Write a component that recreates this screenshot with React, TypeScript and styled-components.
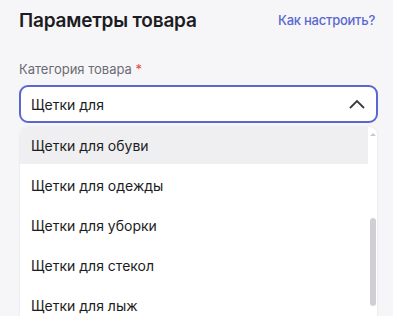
import styled, { createGlobalStyle } from "styled-components"

const Global = createGlobalStyle`
  html, body {
    margin: 0;
    padding: 0;
    background: #f6f6f9;
    font-family: Inter, "Noto Sans", sans-serif;
    color: #1c1c22;
  }
`

const Page = styled.div`
  width: 393px;
  height: 316px;
  overflow: hidden;
  padding: 0 15px 0 19px;
  box-sizing: border-box;
`
const Header = styled.div`
  display: flex;
  justify-content: space-between;
  align-items: center;
  height: 38px;
  padding-top: 1px;
`
const Title = styled.h2`
  margin: 0;
  font-size: 19px;
  font-weight: 600;
  letter-spacing: -0.2px;
`
const HelpLink = styled.a`
  font-size: 13px;
  font-weight: 500;
  letter-spacing: -0.25px;
  color: #5a68cf;
  text-decoration: none;
  margin-right: 3px;
`
const Label = styled.div`
  margin-top: 22px;
  font-size: 13px;
  color: #6b6b73;
  height: 24px;
`
const Star = styled.span`
  color: #e5483f;
`
const Field = styled.div`
  display: flex;
  align-items: center;
  justify-content: space-between;
  height: 38px;
  border: 2px solid #5b67cf;
  border-radius: 9px;
  background: #fff;
  padding: 0 10px 0 10px;
  box-sizing: border-box;
  font-size: 14px;
`
const Menu = styled.div`
  margin: 4px 1px 0 1px;
  background: #fff;
  border-radius: 8px 8px 0 0;
  box-shadow: 0 0 3px rgba(0, 0, 0, 0.08);
  display: flex;
`
const List = styled.div`
  flex: 1;
`
// the hover band stops a few px above the next row
const Option = styled.div<{ active?: boolean }>`
  height: 40px;
  display: flex;
  align-items: center;
  padding: 0 0 3px 11px;
  box-sizing: border-box;
  font-size: 14px;
  background: ${(p) =>
    p.active ? "linear-gradient(#efeff1 0 37px, #fff 37px)" : "#fff"};
  border-radius: ${(p) => (p.active ? "8px 0 0 0" : "0")};
`
const Scroll = styled.div`
  width: 9px;
  display: flex;
  flex-direction: column;
  align-items: center;
`
const Arrow = styled.div`
  margin-top: 6px;
  width: 0;
  height: 0;
  border-left: 3px solid transparent;
  border-right: 3px solid transparent;
  border-bottom: 3px solid #c9c9cd;
`
const Thumb = styled.div`
  margin-top: 82px;
  width: 6px;
  height: 88px;
  border-radius: 3px;
  background: #d0d0d4;
`

const items = [
  "Щетки для обуви",
  "Щетки для одежды",
  "Щетки для уборки",
  "Щетки для стекол",
  "Щетки для лыж",
]

export default function App() {
  return (
    <Page>
      <Global />
      <Header>
        <Title>Параметры товара</Title>
        <HelpLink href="#">Как настроить?</HelpLink>
      </Header>
      <Label>
        Категория товара <Star>*</Star>
      </Label>
      <Field>
        <span>Щетки для</span>
        <svg width="18" height="10" viewBox="0 0 18 10" fill="none">
          <path d="M2 9 L9 2 L16 9" stroke="#3a3a40" strokeWidth="1.8" />
        </svg>
      </Field>
      <Menu>
        <List>
          {items.map((t, i) => (
            <Option key={t} active={i === 0}>
              {t}
            </Option>
          ))}
        </List>
        <Scroll>
          <Arrow />
          <Thumb />
        </Scroll>
      </Menu>
    </Page>
  )
}
